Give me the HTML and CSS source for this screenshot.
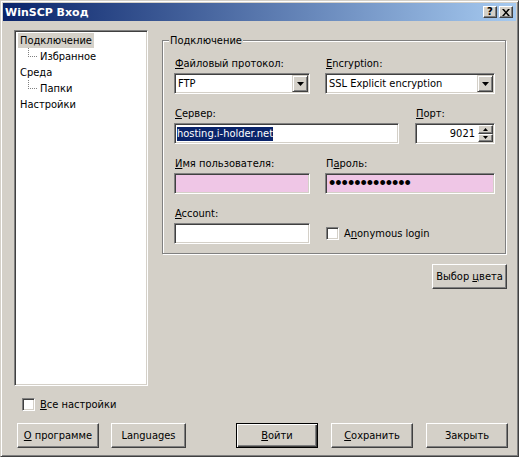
FILE: index.html
```html
<!DOCTYPE html>
<html lang="ru">
<head>
<meta charset="utf-8">
<title>WinSCP Вход</title>
<link rel="stylesheet" href="styles.css">
</head>
<body>
<div class="window">
  <div class="titlebar">
    <span class="title">WinSCP Вход</span>
    <div class="tbuttons">
      <span class="tbtn">?</span>
      <span class="tbtn close">
        <svg width="8" height="7" viewBox="0 0 8 7"><path d="M0 0h2l2 2.5L6 0h2L5 3.5 8 7H6L4 4.5 2 7H0l3-3.5z" fill="#000"/></svg>
      </span>
    </div>
  </div>

  <div class="main">
    <div class="tree">
      <div class="item"><span class="label sel">Подключение</span></div>
      <div class="item child"><span class="branch"></span><span class="label">Избранное</span></div>
      <div class="item"><span class="label">Среда</span></div>
      <div class="item child"><span class="branch"></span><span class="label">Папки</span></div>
      <div class="item"><span class="label">Настройки</span></div>
    </div>

    <div class="right">
      <div class="group">
        <span class="legend">Подключение</span>
        <div class="row">
          <div class="field w136">
            <div class="flabel"><u>Ф</u>айловый протокол:</div>
            <div class="combo"><span class="ctext">FTP</span><span class="dropbtn"><svg width="7" height="4" viewBox="0 0 7 4"><path d="M0 0h7L3.5 4z" fill="#000"/></svg></span></div>
          </div>
          <div class="field w170">
            <div class="flabel"><u>E</u>ncryption:</div>
            <div class="combo"><span class="ctext">SSL Explicit encryption</span><span class="dropbtn"><svg width="7" height="4" viewBox="0 0 7 4"><path d="M0 0h7L3.5 4z" fill="#000"/></svg></span></div>
          </div>
        </div>
        <div class="row">
          <div class="field w225">
            <div class="flabel"><u>С</u>ервер:</div>
            <div class="edit"><span class="selected">hosting.i-holder.net</span></div>
          </div>
          <div class="field w80">
            <div class="flabel"><u>П</u>орт:</div>
            <div class="edit spinedit"><span class="num">9021</span>
              <span class="spin">
                <span class="sbtn"><svg width="5" height="3" viewBox="0 0 5 3"><path d="M2.5 0L5 3H0z" fill="#000"/></svg></span>
                <span class="sbtn"><svg width="5" height="3" viewBox="0 0 5 3"><path d="M0 0h5L2.5 3z" fill="#000"/></svg></span>
              </span>
            </div>
          </div>
        </div>
        <div class="row">
          <div class="field w136">
            <div class="flabel"><u>И</u>мя пользователя:</div>
            <div class="edit pink"></div>
          </div>
          <div class="field w170">
            <div class="flabel">П<u>а</u>роль:</div>
            <div class="edit pink"><span class="dots">•••••••••••••</span></div>
          </div>
        </div>
        <div class="row">
          <div class="field w136">
            <div class="flabel"><u>A</u>ccount:</div>
            <div class="edit"></div>
          </div>
          <div class="field w170 checkfield">
            <label class="check"><span class="box"></span><span>A<u>n</u>onymous login</span></label>
          </div>
        </div>
      </div>
      <div class="colorrow">
        <span class="btn"><span>Выбор <u>ц</u>вета</span></span>
      </div>
    </div>
  </div>

  <div class="allrow">
    <label class="check"><span class="box"></span><span><u>В</u>се настройки</span></label>
  </div>

  <div class="buttons">
    <div class="bgroup">
      <span class="btn wide"><span><u>О</u> программе</span></span>
      <span class="btn"><span>Languages</span></span>
    </div>
    <div class="bgroup right-g">
      <span class="btn wide default"><span><u>В</u>ойти</span></span>
      <span class="btn wide"><span><u>С</u>охранить</span></span>
      <span class="btn wide"><span>Закрыть</span></span>
    </div>
  </div>
</div>
</body>
</html>
```

FILE: styles.css
```css
html, body {
  margin: 0;
  padding: 0;
  background: #d4d0c8;
}
body {
  font-family: "DejaVu Sans Condensed", "Liberation Sans", Arial, sans-serif;
  font-size: 11px;
  color: #000;
}
u { text-decoration: underline; text-underline-offset: 1px; }

.window {
  width: 519px;
  height: 457px;
  box-sizing: border-box;
  background: #d4d0c8;
  border: 1px solid;
  border-color: #d4d0c8 #404040 #404040 #d4d0c8;
  box-shadow: inset 1px 1px #fff, inset -1px -1px #808080;
  padding: 2px;
  display: flex;
  flex-direction: column;
}

.titlebar {
  height: 18px;
  flex: none;
  background: linear-gradient(to right, #0a246a, #a6caf0);
  display: flex;
  align-items: center;
  justify-content: space-between;
  padding: 0 3px 0 2px;
}
.title {
  color: #fff;
  font-family: "DejaVu Sans", sans-serif;
  font-weight: bold;
  font-size: 11px;
}
.tbuttons { display: flex; gap: 2px; }
.tbtn {
  width: 14px;
  height: 12px;
  box-sizing: border-box;
  background: #d4d0c8;
  border: 1px solid;
  border-color: #fff #404040 #404040 #fff;
  box-shadow: inset -1px -1px #808080;
  display: flex;
  align-items: center;
  justify-content: center;
  font-family: "DejaVu Sans", sans-serif;
  font-weight: bold;
  font-size: 10px;
  line-height: 10px;
}

.main {
  display: flex;
  padding: 9px 0 0 11px;
  flex: none;
}

.tree {
  width: 134px;
  height: 356px;
  box-sizing: border-box;
  background: #fff;
  border: 1px solid;
  border-color: #808080 #fff #fff #808080;
  box-shadow: inset 1px 1px #404040, inset -1px -1px #d4d0c8;
  padding: 1px 0 0 3px;
}
.item {
  height: 16px;
  display: flex;
  align-items: center;
}
.item .label {
  padding: 0 2px;
  line-height: 15px;
}
.item .label.sel { background: #d4d0c8; }
.branch {
  align-self: flex-start;
  width: 8px;
  height: 8px;
  border-left: 1px dotted #808080;
  border-bottom: 1px dotted #808080;
  margin-left: 10px;
  margin-right: 1px;
}

.right {
  margin-left: 14px;
  width: 344px;
  display: flex;
  flex-direction: column;
}
.group {
  position: relative;
  margin-top: 10px;
  border: 1px solid #808080;
  box-shadow: 1px 1px 0 #fff, inset 1px 1px 0 #fff;
  padding: 16px 10px 9px 11px;
  display: flex;
  flex-direction: column;
  gap: 13px;
}
.legend {
  position: absolute;
  top: -8px;
  left: 6px;
  padding: 0 1px;
  background: #d4d0c8;
  line-height: 15px;
}
.row {
  display: flex;
  justify-content: space-between;
  width: 321px;
}
.field { display: flex; flex-direction: column; }
.w136 { width: 136px; }
.w170 { width: 170px; }
.w225 { width: 225px; }
.w80 { width: 80px; }
.flabel {
  height: 16px;
  line-height: 14px;
  padding-left: 1px;
}

.edit, .combo {
  height: 21px;
  box-sizing: border-box;
  background: #fff;
  border: 1px solid;
  border-color: #808080 #fff #fff #808080;
  box-shadow: inset 1px 1px #404040, inset -1px -1px #d4d0c8;
  display: flex;
  align-items: center;
  padding: 0 2px 0 2px;
  overflow: hidden;
}
.pink { background: #efc6e6; }
.combo { justify-content: space-between; padding-right: 1px; }
.ctext { padding-left: 1px; }
.dropbtn {
  width: 16px;
  height: 17px;
  flex: none;
  box-sizing: border-box;
  background: #d4d0c8;
  border: 1px solid;
  border-color: #d4d0c8 #404040 #404040 #d4d0c8;
  box-shadow: inset 1px 1px #fff, inset -1px -1px #808080;
  display: flex;
  align-items: center;
  justify-content: center;
}
.selected {
  background: #0a246a;
  color: #fff;
  line-height: 14px;
}
.spinedit { justify-content: flex-end; padding-right: 1px; }
.num { margin-right: 3px; }
.spin {
  display: flex;
  flex-direction: column;
  width: 15px;
  height: 17px;
}
.sbtn {
  flex: 1;
  box-sizing: border-box;
  background: #d4d0c8;
  border: 1px solid;
  border-color: #fff #404040 #404040 #fff;
  box-shadow: inset -1px -1px #808080;
  display: flex;
  align-items: center;
  justify-content: center;
}
.dots {
  font-family: "Liberation Sans", sans-serif;
  font-size: 18px;
  line-height: 15px;
  padding-left: 1px;
}

.checkfield { justify-content: flex-end; padding-bottom: 4px; box-sizing: border-box; padding-left: 1px; }
.check {
  display: flex;
  align-items: center;
  gap: 5px;
}
.box {
  width: 13px;
  height: 13px;
  box-sizing: border-box;
  background: #fff;
  border: 1px solid;
  border-color: #808080 #fff #fff #808080;
  box-shadow: inset 1px 1px #404040, inset -1px -1px #d4d0c8;
}

.colorrow {
  display: flex;
  justify-content: flex-end;
  margin-top: 10px;
  margin-right: -1px;
}

.btn {
  width: 75px;
  height: 25px;
  box-sizing: border-box;
  background: #d4d0c8;
  border: 1px solid;
  border-color: #fff #404040 #404040 #fff;
  box-shadow: inset -1px -1px #808080;
  display: flex;
  align-items: center;
  justify-content: center;
}
.btn.wide { width: 82px; }
.btn.default {
  border-color: #000;
  box-shadow: inset 1px 1px #fff, inset -1px -1px #404040, inset -2px -2px #808080;
}

.allrow {
  padding: 12px 0 0 19px;
  height: 13px;
}
.buttons {
  display: flex;
  justify-content: space-between;
  padding: 12px 8px 0 14px;
}
.bgroup { display: flex; gap: 12px; }
.right-g { gap: 13px; }
```
